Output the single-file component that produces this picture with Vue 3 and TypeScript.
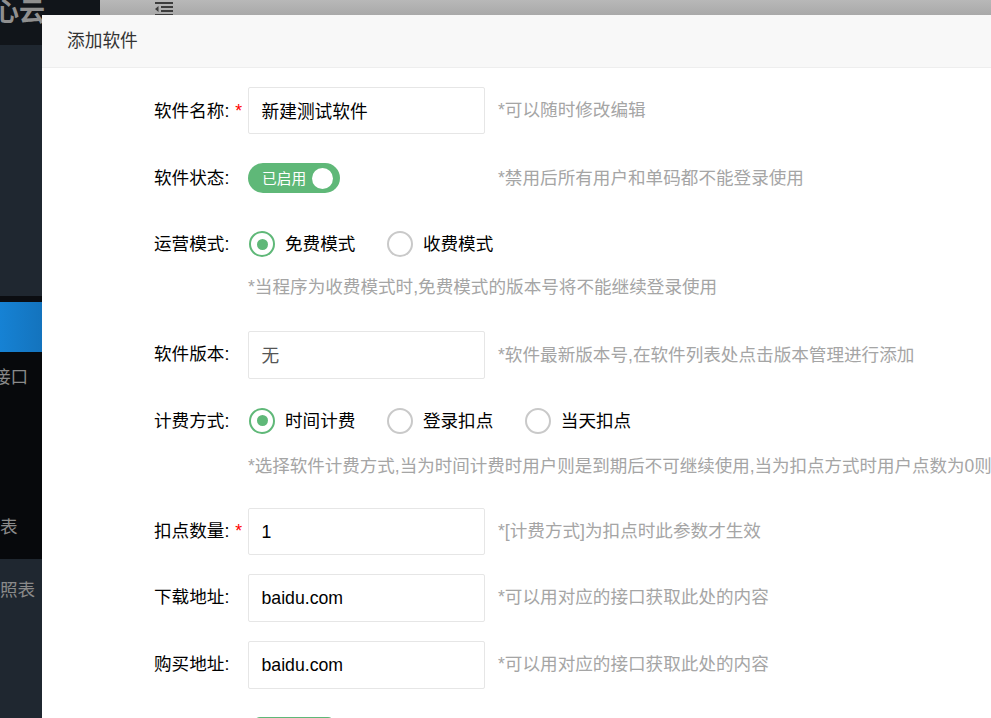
<template>
  <div class="page">
    <aside class="side">
      <div class="logo">心云</div>
      <div class="side-top"></div>
      <div class="side-sep"></div>
      <div class="side-active"></div>
      <div class="side-dark">
        <div class="dark-item one">接口</div>
        <div class="dark-item two">表</div>
      </div>
      <div class="side-bottom">
        <div class="bottom-item">照表</div>
      </div>
    </aside>

    <main class="main">
      <div class="topbar">
        <svg class="menu-icon" width="18" height="16" viewBox="0 0 18 16">
          <path d="M0 2h18v2H0zM6 6h12v2H6zM6 10h12v2H6zM0 14h18v2H0zM3.5 6v6L0 9z" fill="#3d3d3d" />
        </svg>
      </div>

      <section class="dialog">
        <header class="dialog-title">添加软件</header>
        <form class="form" @submit.prevent>
          <div class="row r-name">
            <label class="label">软件名称:<i class="req">*</i></label>
            <div class="input">新建测试软件</div>
            <span class="hint">*可以随时修改编辑</span>
          </div>

          <div class="row r-status">
            <label class="label">软件状态:</label>
            <div class="control">
              <div class="switch">
                <span>已启用</span>
                <b></b>
              </div>
            </div>
            <span class="hint">*禁用后所有用户和单码都不能登录使用</span>
          </div>

          <div class="row r-mode">
            <label class="label">运营模式:</label>
            <div class="radios">
              <span v-for="m in modes" :key="m.text" class="radio" :class="{ on: m.on }">
                <em></em>{{ m.text }}
              </span>
            </div>
          </div>
          <p class="note n-mode">*当程序为收费模式时,免费模式的版本号将不能继续登录使用</p>

          <div class="row r-version">
            <label class="label">软件版本:</label>
            <div class="input muted">无</div>
            <span class="hint">*软件最新版本号,在软件列表处点击版本管理进行添加</span>
          </div>

          <div class="row r-billing">
            <label class="label">计费方式:</label>
            <div class="radios">
              <span v-for="m in billing" :key="m.text" class="radio" :class="{ on: m.on }">
                <em></em>{{ m.text }}
              </span>
            </div>
          </div>
          <p class="note n-billing">*选择软件计费方式,当为时间计费时用户则是到期后不可继续使用,当为扣点方式时用户点数为0则</p>

          <div class="row r-points">
            <label class="label">扣点数量:<i class="req">*</i></label>
            <div class="input latin">1</div>
            <span class="hint">*[计费方式]为扣点时此参数才生效</span>
          </div>

          <div class="row r-down">
            <label class="label">下载地址:</label>
            <div class="input latin">baidu.com</div>
            <span class="hint">*可以用对应的接口获取此处的内容</span>
          </div>

          <div class="row r-buy">
            <label class="label">购买地址:</label>
            <div class="input latin">baidu.com</div>
            <span class="hint">*可以用对应的接口获取此处的内容</span>
          </div>

          <div class="submit"></div>
        </form>
      </section>
    </main>
  </div>
</template>

<script setup lang="ts">
interface RadioItem {
  text: string
  on: boolean
}

const modes: RadioItem[] = [
  { text: '免费模式', on: true },
  { text: '收费模式', on: false },
]

const billing: RadioItem[] = [
  { text: '时间计费', on: true },
  { text: '登录扣点', on: false },
  { text: '当天扣点', on: false },
]
</script>

<style>
html,
body {
  margin: 0;
  overflow: hidden;
}
</style>

<style scoped>
.page {
  display: flex;
  width: 991px;
  height: 718px;
  overflow: hidden;
  font-family: "Liberation Sans", "Noto Sans CJK SC", sans-serif;
  background: #fff;
}

.side {
  width: 100px;
  flex: none;
  display: flex;
  flex-direction: column;
  color: #8a8a8a;
  font-size: 17.6px;
  overflow: hidden;
}

.logo {
  height: 45px;
  background: #11151a;
  color: #8f8f8f;
  font-size: 26px;
  font-weight: 700;
  line-height: 24px;
  padding-left: 0;
  text-indent: -7px;
}

.side-top {
  height: 251px;
  background: #1f2730;
}

.side-sep {
  height: 6px;
  background: #0b0d11;
}

.side-active {
  height: 50px;
  background: linear-gradient(90deg, #1682d4, #105f9e);
}

.side-dark {
  height: 207px;
  background: #07090c;
  position: relative;
}

.dark-item {
  position: absolute;
  white-space: nowrap;
  line-height: 24px;
}

.dark-item.one {
  top: 13px;
  left: -7px;
}

.dark-item.two {
  top: 163px;
  left: 0;
}

.side-bottom {
  flex: 1;
  background: #1f2730;
  padding-top: 19px;
}

.bottom-item {
  line-height: 24px;
}

.main {
  flex: 1;
  min-width: 0;
}

.topbar {
  height: 15px;
  background: linear-gradient(#b8b8b8, #a9a9a9);
  overflow: hidden;
  padding-left: 55px;
}

.menu-icon {
  display: block;
}

/* dialog sits over the whole page */
.dialog {
  position: absolute;
  left: 42px;
  top: 15px;
  width: 949px;
  height: 703px;
  background: #fff;
  overflow: hidden;
}

.dialog-title {
  height: 52px;
  line-height: 53px;
  padding-left: 25px;
  background: #f8f8f8;
  border-bottom: 1px solid #eee;
  color: #333;
  font-size: 17.7px;
}

.form {
  padding-left: 112px;
  font-size: 17.6px;
  color: #000;
}

.row {
  display: flex;
  align-items: center;
  white-space: nowrap;
}

.label {
  width: 94px;
  flex: none;
  line-height: 22px;
}

.req {
  color: #f00;
  font-style: normal;
  margin-left: 6px;
}

.input {
  width: 237px;
  height: 47.4px;
  line-height: 48.5px;
  flex: none;
  border: 1px solid #e6e6e6;
  border-radius: 2px;
  padding-left: 12.5px;
  box-sizing: border-box;
  font-size: 17.7px;
  color: #000;
}

.input.latin {
  line-height: 46.5px;
}

.input.muted {
  color: #555;
}

.hint {
  margin-left: 13px;
  padding-bottom: 4px;
  color: #a5a5a5;
}

.control {
  width: 237px;
  flex: none;
}

.switch {
  width: 92px;
  height: 30px;
  border-radius: 15px;
  background: #5fb878;
  display: flex;
  align-items: center;
  justify-content: space-between;
  box-sizing: border-box;
  padding: 0 7px 0 14px;
  color: #fff;
  font-size: 14.7px;
}

.switch span {
  padding-bottom: 2px;
}

.switch b {
  width: 21px;
  height: 21px;
  border-radius: 50%;
  background: #fff;
}

.radios {
  display: flex;
  gap: 31.5px;
  margin-left: 1px;
}

.radio {
  display: flex;
  align-items: center;
  gap: 10px;
  line-height: 26px;
}

.radio em {
  width: 26px;
  height: 26px;
  box-sizing: border-box;
  border-radius: 50%;
  border: 2px solid #c9c9c9;
  display: flex;
  align-items: center;
  justify-content: center;
}

.radio.on em {
  border-color: #5fb878;
}

.radio.on em::after {
  content: "";
  width: 11px;
  height: 11px;
  border-radius: 50%;
  background: #5fb878;
}

.note {
  margin: 0 0 0 94px;
  color: #a5a5a5;
  line-height: 22px;
  white-space: nowrap;
}

.r-name { margin-top: 19px; }
.r-status { margin-top: 29px; }
.r-mode { margin-top: 38px; }
.n-mode { margin-top: 19px; }
.r-version { margin-top: 33px; }
.r-billing { margin-top: 29px; }
.n-billing { margin-top: 21px; font-size: 17.5px; }
.r-points { margin-top: 31px; }
.r-down { margin-top: 19px; }
.r-buy { margin-top: 19.6px; }

.r-version .label,
.r-down .label,
.r-buy .label {
  padding-bottom: 2px;
}

.submit {
  margin: 28px 0 0 100px;
  width: 80px;
  height: 38px;
  border-radius: 6px;
  background: #5fb878;
}
</style>
